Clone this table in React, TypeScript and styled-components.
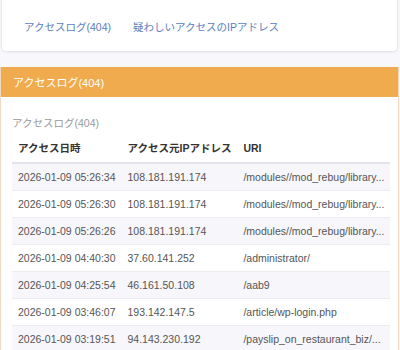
import React from "react";
import styled, { createGlobalStyle } from "styled-components";

const Global = createGlobalStyle`
  html, body { margin: 0; padding: 0; }
  body {
    background: #f8f8fc;
    font-family: "Liberation Sans", "Noto Sans CJK JP", sans-serif;
    width: 400px;
    height: 350px;
    overflow: hidden;
  }
`;

const Page = styled.div`
  display: flex;
  flex-direction: column;
  gap: 15px;
`;

const NavCard = styled.nav`
  margin: 0 2px 0 1px;
  height: 52px;
  background: #ffffff;
  border: 1px solid #e6e6ee;
  border-top: none;
  border-radius: 0 0 5px 5px;
  box-shadow: 0 1px 2px rgba(0, 0, 0, 0.04);
  display: flex;
  align-items: center;
  gap: 22px;
  padding: 0 22px;
  box-sizing: border-box;
`;

const NavLink = styled.a`
  color: #5b7ec0;
  font-size: 10.5px;
  text-decoration: none;
  padding-top: 1px;
`;

const Panel = styled.section`
  margin: 0 1px 0 0;
  background: #ffffff;
  border: 1px solid #efd9c4;
  border-top: none;
`;

const PanelHeader = styled.div`
  height: 30px;
  background: #efab4d;
  color: #ffffff;
  font-size: 11px;
  display: flex;
  align-items: center;
  padding: 0 12px;
`;

const PanelBody = styled.div`
  padding: 19px 11px 0 11px;
`;

const Subtitle = styled.div`
  color: #9a9a9a;
  font-size: 10.5px;
  line-height: 14px;
  margin-bottom: 3px;
`;

const Table = styled.table`
  width: 100%;
  border-collapse: collapse;
  font-size: 10.5px;
`;

const Th = styled.th<{ $w?: number }>`
  text-align: left;
  font-weight: bold;
  color: #333333;
  height: 29px;
  padding: 0 6px;
  border-bottom: 2px solid #e4e2ea;
  white-space: nowrap;
  width: ${(p) => (p.$w ? `${p.$w}px` : "auto")};
`;

const Tr = styled.tr<{ $striped: boolean }>`
  background: ${(p) => (p.$striped ? "#f7f6fa" : "#ffffff")};
`;

const Td = styled.td`
  color: #555555;
  height: 26px;
  padding: 0 6px;
  border-top: 1px solid #ecebf0;
  white-space: nowrap;
`;

const rows = [
  ["2026-01-09 05:26:34", "108.181.191.174", "/modules//mod_rebug/library..."],
  ["2026-01-09 05:26:30", "108.181.191.174", "/modules//mod_rebug/library..."],
  ["2026-01-09 05:26:26", "108.181.191.174", "/modules//mod_rebug/library..."],
  ["2026-01-09 04:40:30", "37.60.141.252", "/administrator/"],
  ["2026-01-09 04:25:54", "46.161.50.108", "/aab9"],
  ["2026-01-09 03:46:07", "193.142.147.5", "/article/wp-login.php"],
  ["2026-01-09 03:19:51", "94.143.230.192", "/payslip_on_restaurant_biz/..."],
];

export default function App() {
  return (
    <>
      <Global />
      <Page>
        <NavCard>
          <NavLink href="#">アクセスログ(404)</NavLink>
          <NavLink href="#">疑わしいアクセスのIPアドレス</NavLink>
        </NavCard>
        <Panel>
          <PanelHeader>アクセスログ(404)</PanelHeader>
          <PanelBody>
            <Subtitle>アクセスログ(404)</Subtitle>
            <Table>
              <thead>
                <tr>
                  <Th $w={97}>アクセス日時</Th>
                  <Th $w={103}>アクセス元IPアドレス</Th>
                  <Th>URI</Th>
                </tr>
              </thead>
              <tbody>
                {rows.map((r, i) => (
                  <Tr key={i} $striped={i % 2 === 0}>
                    <Td>{r[0]}</Td>
                    <Td>{r[1]}</Td>
                    <Td>{r[2]}</Td>
                  </Tr>
                ))}
              </tbody>
            </Table>
          </PanelBody>
        </Panel>
      </Page>
    </>
  );
}
